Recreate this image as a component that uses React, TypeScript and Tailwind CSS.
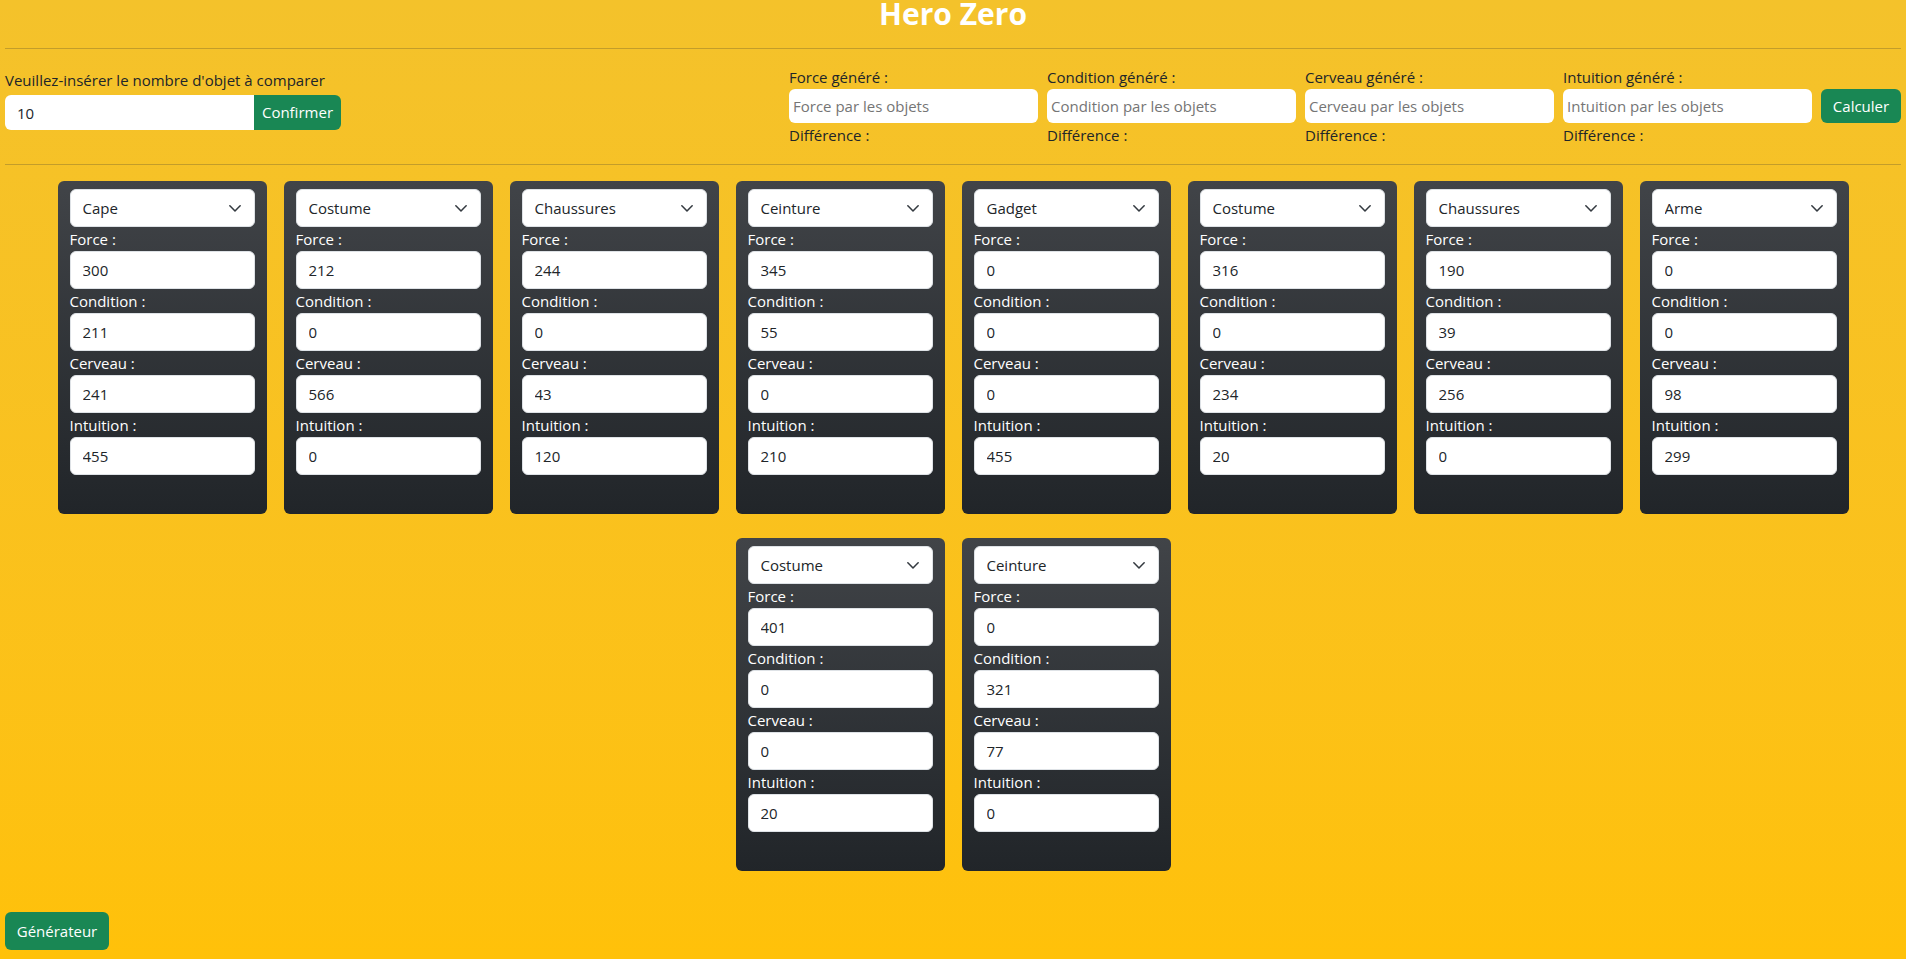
import { useState } from "react"

const ITEM_TYPES = ["Cape", "Costume", "Chaussures", "Ceinture", "Gadget", "Arme"]

const ITEMS = [
  { type: "Cape", force: 300, condition: 211, cerveau: 241, intuition: 455 },
  { type: "Costume", force: 212, condition: 0, cerveau: 566, intuition: 0 },
  { type: "Chaussures", force: 244, condition: 0, cerveau: 43, intuition: 120 },
  { type: "Ceinture", force: 345, condition: 55, cerveau: 0, intuition: 210 },
  { type: "Gadget", force: 0, condition: 0, cerveau: 0, intuition: 455 },
  { type: "Costume", force: 316, condition: 0, cerveau: 234, intuition: 20 },
  { type: "Chaussures", force: 190, condition: 39, cerveau: 256, intuition: 0 },
  { type: "Arme", force: 0, condition: 0, cerveau: 98, intuition: 299 },
  { type: "Costume", force: 401, condition: 0, cerveau: 0, intuition: 20 },
  { type: "Ceinture", force: 0, condition: 321, cerveau: 77, intuition: 0 },
]

const STATS = [
  { key: "force", label: "Force" },
  { key: "condition", label: "Condition" },
  { key: "cerveau", label: "Cerveau" },
  { key: "intuition", label: "Intuition" },
] as const

function ItemCard({ item }: { item: (typeof ITEMS)[number] }) {
  return (
    <div className="w-[209px] rounded-md bg-gradient-to-b from-[#414448] to-[#212529] px-3 pt-2 pb-[39px] text-white">
      <div className="relative">
        <select
          defaultValue={item.type}
          className="h-[38px] w-full appearance-none rounded-md border border-[#dee2e6] bg-white pl-3 pr-9 text-[15px] text-[#212529] outline-none"
        >
          {ITEM_TYPES.map((t) => (
            <option key={t} value={t}>
              {t}
            </option>
          ))}
        </select>
        {/* chevron du select */}
        <svg
          className="pointer-events-none absolute right-[14px] top-[14px]"
          width="12"
          height="9"
          viewBox="1 2 14 10"
        >
          <path d="m2 5 6 6 6-6" fill="none" stroke="#343a40" strokeWidth="1.8" strokeLinecap="round" strokeLinejoin="round" />
        </svg>
      </div>
      {STATS.map((s) => (
        <div key={s.key}>
          <label className="block leading-6">{s.label} :</label>
          <input
            type="text"
            defaultValue={item[s.key]}
            className="h-[38px] w-full rounded-md border border-[#dee2e6] bg-white px-3 text-[15px] text-[#212529] outline-none"
          />
        </div>
      ))}
    </div>
  )
}

export default function App() {
  const [count, setCount] = useState("10")

  return (
    <div
      className="min-h-screen bg-gradient-to-b from-[#f4c22b] to-[#ffc109] px-[5px] pb-2 text-[15px] text-[#212529]"
      style={{ fontFamily: '"Open Sans", "Noto Sans", sans-serif' }}
    >
      <div className="h-[48px]">
        <h1 className="text-center text-[30px] font-bold leading-[27px] text-white">Hero Zero</h1>
      </div>
      <div className="border-t border-[#c39d2a]" />

      {/* Saisie */}
      <div className="flex h-[115px] items-start justify-between">
        <div className="mt-[19px]">
          <label className="block leading-6">Veuillez-insérer le nombre d'objet à comparer</label>
          <div className="mt-[3px] flex">
            <input
              type="text"
              value={count}
              onChange={(e) => setCount(e.target.value)}
              className="h-[35px] w-[249px] rounded-l-md bg-white px-3 text-[#212529] outline-none"
            />
            <button className="h-[35px] w-[87px] rounded-r-md bg-[#198754] text-white">Confirmer</button>
          </div>
        </div>

        <div className="mt-[16px] flex items-start gap-[9px]">
          {["Force", "Condition", "Cerveau", "Intuition"].map((name) => (
            <div key={name} className="w-[249px]">
              <label className="block leading-6">{name} généré :</label>
              <input
                type="text"
                placeholder={`${name} par les objets`}
                className="h-[34px] w-full rounded-md bg-white px-1 text-[#212529] outline-none placeholder:text-[#757575]"
              />
              <div className="leading-6">Différence :</div>
            </div>
          ))}
          <button className="mt-6 h-[34px] w-[80px] rounded-md bg-[#198754] text-white">Calculer</button>
        </div>
      </div>
      <div className="border-t border-[#c39d2a]" />

      {/* Objets */}
      <div className="mt-4 flex flex-wrap justify-center gap-x-[17px] gap-y-6">
        {ITEMS.map((item, i) => (
          <ItemCard key={i} item={item} />
        ))}
      </div>

      <button className="mt-[41px] h-[38px] w-[104px] rounded-md bg-[#198754] text-white">Générateur</button>
    </div>
  )
}
